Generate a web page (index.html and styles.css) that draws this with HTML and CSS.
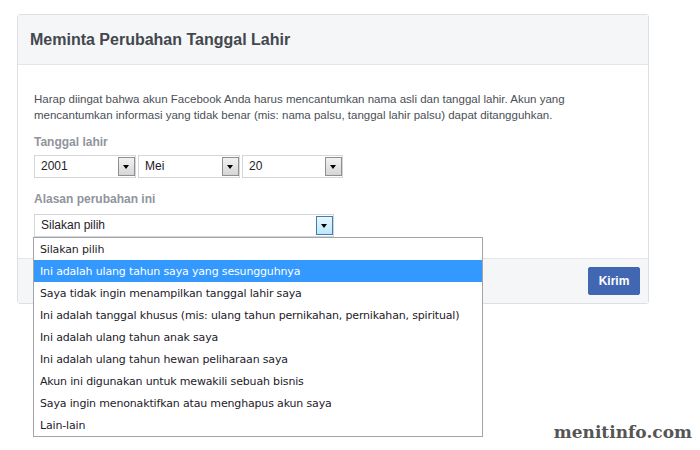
FILE: index.html
```html
<!DOCTYPE html>
<html lang="id">
<head>
  <meta charset="UTF-8">
  <title>Meminta Perubahan Tanggal Lahir</title>
  <link rel="stylesheet" href="styles.css">
</head>
<body>
  <div class="dialog">
    <div class="dialog-header">
      <h2>Meminta Perubahan Tanggal Lahir</h2>
    </div>
    <div class="dialog-body">
      <p class="note">Harap diingat bahwa akun Facebook Anda harus mencantumkan nama asli dan tanggal lahir. Akun yang mencantumkan informasi yang tidak benar (mis: nama palsu, tanggal lahir palsu) dapat ditangguhkan.</p>

      <div class="label">Tanggal lahir</div>
      <div class="date-row">
        <div class="select select-year">2001<span class="arrow"></span></div>
        <div class="select select-month">Mei<span class="arrow"></span></div>
        <div class="select select-day">20<span class="arrow"></span></div>
      </div>

      <div class="label label-reason">Alasan perubahan ini</div>
      <div class="reason-wrap">
        <div class="select select-reason">Silakan pilih<span class="arrow arrow-hot"></span></div>
        <ul class="dropdown">
          <li>Silakan pilih</li>
          <li class="selected">Ini adalah ulang tahun saya yang sesungguhnya</li>
          <li>Saya tidak ingin menampilkan tanggal lahir saya</li>
          <li>Ini adalah tanggal khusus (mis: ulang tahun pernikahan, pernikahan, spiritual)</li>
          <li>Ini adalah ulang tahun anak saya</li>
          <li>Ini adalah ulang tahun hewan peliharaan saya</li>
          <li>Akun ini digunakan untuk mewakili sebuah bisnis</li>
          <li>Saya ingin menonaktifkan atau menghapus akun saya</li>
          <li>Lain-lain</li>
        </ul>
      </div>
    </div>
    <div class="dialog-footer">
      <button>Kirim</button>
    </div>
  </div>
  <div class="watermark">menitinfo.com</div>
</body>
</html>
```

FILE: styles.css
```css
body {
  margin: 0;
  background: #fff;
  font-family: "Liberation Sans", Arial, sans-serif;
  font-size: 12px;
  color: #4b4f56;
}
.dialog {
  width: 630px;
  margin: 14px 0 0 17px;
  border: 1px solid #dddfe2;
  border-radius: 3px;
}
.dialog-header {
  height: 49px;
  background: #f5f6f7;
  border-bottom: 1px solid #e5e5e5;
  padding: 0 12px;
  display: flex;
  align-items: center;
}
.dialog-header h2 {
  margin: 0;
  font-size: 16px;
  font-weight: bold;
  color: #43474e;
}
.dialog-body {
  padding: 26px 16px 21px;
}
.note {
  margin: 0;
  font-size: 11.5px;
  line-height: 16px;
}
.label {
  margin-top: 11px;
  line-height: 16px;
  font-weight: bold;
  color: #90949c;
}
.label-reason {
  margin-top: 13px;
}
.date-row {
  display: flex;
  gap: 2px;
  margin-top: 5px;
}
.select {
  position: relative;
  box-sizing: border-box;
  height: 23px;
  line-height: 21px;
  padding-left: 6px;
  border: 1px solid #d3d6db;
  background: #fff;
  color: #1d2129;
  font-size: 12px;
}
.select-year { width: 102px; }
.select-month { width: 102px; }
.select-day { width: 101px; }
.arrow {
  position: absolute;
  right: 0;
  top: 1px;
  width: 15px;
  height: 17px;
  border: 1px solid #8e8f8f;
  background: linear-gradient(#f2f2f2, #d6d6d6);
}
.arrow::after {
  content: "";
  position: absolute;
  left: 4px;
  top: 7px;
  border-left: 3.5px solid transparent;
  border-right: 3.5px solid transparent;
  border-top: 4px solid #000;
}
.arrow-hot {
  border-color: #3c7fb1;
  background: linear-gradient(#eaf6fd, #bee6fd);
}
.reason-wrap {
  position: relative;
  margin-top: 7px;
}
.select-reason {
  width: 300px;
}
.dropdown {
  position: absolute;
  left: -1px;
  top: 23px;
  width: 448px;
  margin: 0;
  padding: 0;
  list-style: none;
  background: #fff;
  border: 1px solid #a4a4a4;
  font-family: "DejaVu Sans", Tahoma, sans-serif;
  font-size: 11px;
  letter-spacing: -0.16px;
  color: #1d2129;
  z-index: 2;
}
.dropdown li {
  height: 22px;
  line-height: 24px;
  padding-left: 6px;
  overflow: hidden;
}
.dropdown li.selected {
  background: #3399ff;
  color: #fff;
}
.dialog-footer {
  height: 44px;
  background: #f5f6f7;
  border-top: 1px solid #e5e5e5;
  display: flex;
  align-items: center;
  justify-content: flex-end;
  padding-right: 8px;
}
.dialog-footer button {
  width: 52px;
  height: 28px;
  border: 1px solid #4267b2;
  border-radius: 2px;
  background: #4267b2;
  color: #fff;
  font-family: "Liberation Sans", Arial, sans-serif;
  font-size: 12px;
  font-weight: bold;
}
.watermark {
  margin-top: 118px;
  padding-right: 8px;
  text-align: right;
  font-family: "DejaVu Serif", Georgia, serif;
  font-size: 17px;
  font-weight: bold;
  color: #555;
}
```
